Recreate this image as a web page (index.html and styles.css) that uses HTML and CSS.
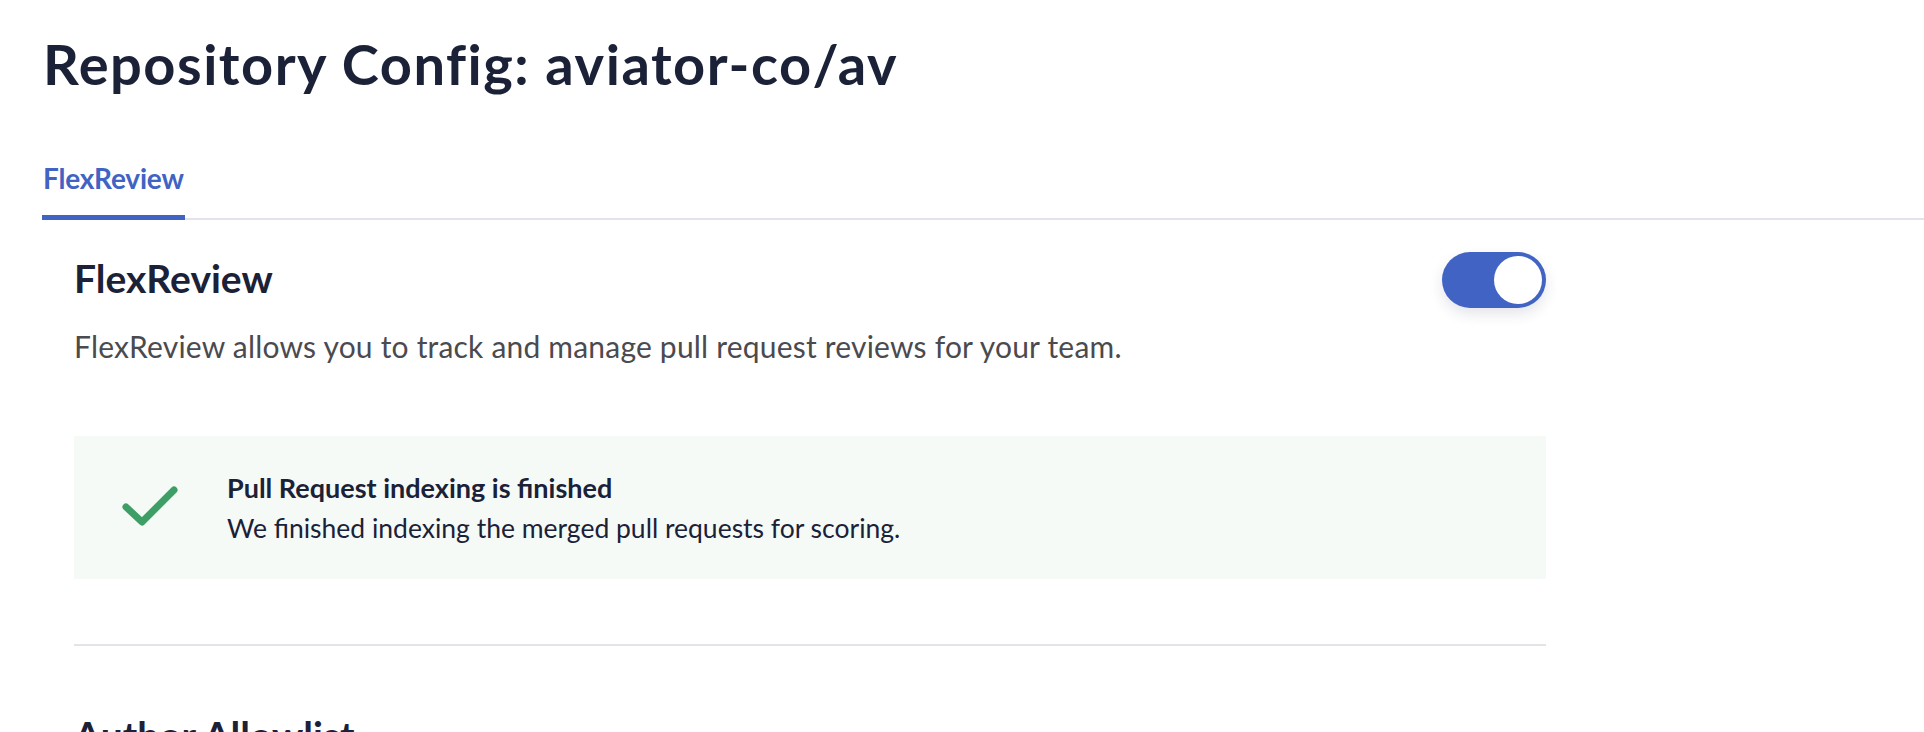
FILE: index.html
```html
<!DOCTYPE html>
<html lang="en">
<head>
<meta charset="utf-8">
<title>Repository Config: aviator-co/av</title>
<link rel="stylesheet" href="styles.css">
</head>
<body>
<div class="page">
  <h1 class="page-title">Repository Config: aviator-co/av</h1>
  <nav class="tabs">
    <a class="tab tab-active">FlexReview</a>
  </nav>
  <main class="content">
    <section class="section">
      <div class="section-head">
        <h2 class="section-title section-title-head">FlexReview</h2>
        <div class="toggle toggle-on"><span class="toggle-knob"></span></div>
      </div>
      <p class="section-desc">FlexReview allows you to track and manage pull request reviews for your team.</p>
      <div class="alert">
        <svg class="alert-icon" width="60" height="44" viewBox="0 0 60 44" aria-hidden="true">
          <path d="M6 23 L22 38 L54 6" fill="none" stroke="#3e9f66" stroke-width="7" stroke-linecap="round" stroke-linejoin="round"/>
        </svg>
        <div class="alert-body">
          <div class="alert-title">Pull Request indexing is finished</div>
          <div class="alert-text">We finished indexing the merged pull requests for scoring.</div>
        </div>
      </div>
    </section>
    <hr class="divider">
    <section class="section">
      <h2 class="section-title section-title-alone">Author Allowlist</h2>
    </section>
  </main>
</div>
</body>
</html>
```

FILE: styles.css
```css
* { box-sizing: border-box; }
html, body { margin: 0; padding: 0; background: #ffffff; }
body {
  font-family: Lato, "Noto Sans", "Liberation Sans", sans-serif;
  color: #1b2137;
  overflow: hidden;
  height: 732px;
}
.page {
  padding-top: 32px;
  padding-left: 42px;
}
.page-title {
  margin: 0 0 0 1px;
  font-size: 56px;
  line-height: 64px;
  font-weight: 700;
  color: #1b2137;
  letter-spacing: 1.5px;
}
.tabs {
  margin-top: 65px;
  display: flex;
  border-bottom: 2px solid #e1e4ef;
}
.tab {
  display: block;
  font-size: 28px;
  line-height: 34px;
  font-weight: 700;
  color: #4063c4;
  padding: 0 1px 20px 1px;
  border-bottom: 5px solid #4063c4;
  margin-bottom: -2px;
  letter-spacing: -0.2px;
}
.content {
  margin-left: 32px;
  width: 1472px;
}
.section { padding-top: 32px; }
.section-head {
  display: flex;
  align-items: center;
  justify-content: space-between;
  height: 56px;
}
.section-title {
  margin: 0;
  font-size: 39px;
  line-height: 48px;
  font-weight: 700;
  color: #1b2137;
}
.section-title-head { margin-top: -4px; }
.section-title-alone { margin-top: 33px; }
.toggle {
  width: 104px;
  height: 56px;
  border-radius: 28px;
  background: #4063c4;
  padding: 4px;
  display: flex;
  justify-content: flex-end;
  box-shadow: 0 6px 14px rgba(30, 40, 80, 0.12);
}
.toggle-knob {
  width: 48px;
  height: 48px;
  border-radius: 50%;
  background: #ffffff;
}
.section-desc {
  margin: 18px 0 0 0;
  font-size: 30px;
  line-height: 40px;
  color: #4a4a4f;
  letter-spacing: 0.2px;
}
.alert {
  margin-top: 70px;
  height: 143px;
  background: #f5faf7;
  display: flex;
  align-items: center;
  padding-left: 46px;
}
.alert-icon { flex: none; margin-top: -3px; }
.alert-body { margin-left: 47px; }
.alert-title {
  font-size: 27px;
  line-height: 40px;
  font-weight: 700;
  color: #1b2137;
}
.alert-text {
  font-size: 26.5px;
  line-height: 40px;
  color: #1b2137;
}
.divider {
  margin: 65px 0 0 0;
  border: 0;
  height: 2px;
  background: #e3e3ea;
}
```
